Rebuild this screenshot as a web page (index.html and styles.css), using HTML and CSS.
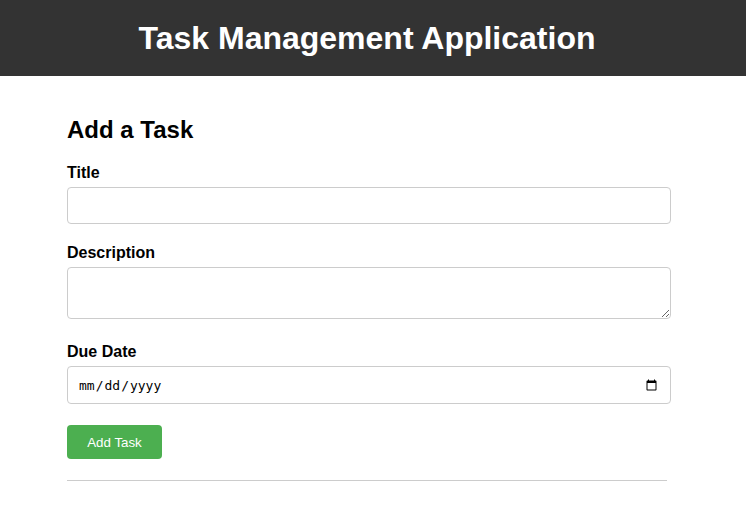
FILE: index.html
```html
<!DOCTYPE html>
<html lang="en">
<head>
<meta charset="utf-8">
<title>Task Management Application</title>
<link rel="stylesheet" href="styles.css">
</head>
<body>
<header class="app-header">
  <h1 class="app-title">Task Management Application</h1>
</header>
<div class="page">
  <main class="container">
    <h2 class="section-title">Add a Task</h2>
    <form class="task-form">
      <div class="form-group">
        <label class="form-label" for="title">Title</label>
        <input class="form-input" type="text" id="title">
      </div>
      <div class="form-group group-desc">
        <label class="form-label" for="desc">Description</label>
        <textarea class="form-input form-textarea" id="desc"></textarea>
      </div>
      <div class="form-group group-date">
        <label class="form-label" for="due">Due Date</label>
        <input class="form-input form-date" type="date" id="due">
      </div>
      <button class="btn-add" type="button">Add Task</button>
    </form>
    <hr class="divider">
  </main>
</div>
</body>
</html>
```

FILE: styles.css
```css
* { box-sizing: border-box; }

body {
  margin: 0;
  font-family: "Liberation Sans", Arial, sans-serif;
  background: #fff;
  color: #000;
}

.app-header {
  background: #333;
  color: #fff;
  text-align: center;
  padding: 20px 12px 20px 0;
}

.app-title {
  margin: 0;
  font-size: 32px;
  line-height: 36px;
  font-weight: bold;
}

.page {
  padding-right: 12px;
}

.container {
  width: 600px;
  margin: 0 auto;
  padding-top: 20px;
}

.section-title {
  font-size: 24px;
  font-weight: bold;
  margin: 20px 0 20px;
}

.task-form {
  display: flex;
  flex-direction: column;
  align-items: flex-start;
}

.form-group {
  width: 100%;
  margin-bottom: 20px;
}

.group-desc { margin-bottom: 24px; }
.group-date { margin-bottom: 21px; }

.form-label {
  display: block;
  font-size: 16px;
  font-weight: bold;
  margin-bottom: 5px;
}

.form-input {
  display: block;
  width: 604px;
  height: 37px;
  border: 1px solid #ccc;
  border-radius: 4px;
  padding: 8px 10px;
  font-family: "Liberation Sans", Arial, sans-serif;
  font-size: 13px;
  background: #fff;
  margin: 0;
}

.form-textarea {
  height: 52px;
  resize: vertical;
}

.form-date {
  height: 38px;
  font-family: "DejaVu Sans Mono", monospace;
  font-size: 13px;
  color: #000;
}

.btn-add {
  width: 95px;
  height: 34px;
  background: #4caf50;
  color: #fff;
  border: none;
  border-radius: 4px;
  font-family: "Liberation Sans", Arial, sans-serif;
  font-size: 13.33px;
  padding: 0;
  cursor: pointer;
}

.divider {
  border: none;
  border-top: 1px solid #ccc;
  margin: 21px 0 0;
  width: 600px;
  height: 0;
}
```
